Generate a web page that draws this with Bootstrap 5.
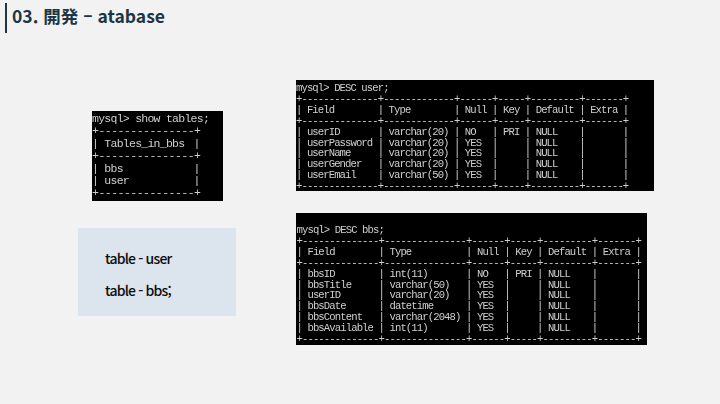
<!DOCTYPE html>
<html lang="ko">
<head>
<meta charset="utf-8">
<title>03. 開発 – atabase</title>
<link href="https://cdn.jsdelivr.net/npm/bootstrap@5.3.0/dist/css/bootstrap.min.css" rel="stylesheet">
<style>
html, body { height: 404px; overflow: hidden; }
body { background: #f2f2f2; font-family: "Noto Sans CJK KR", "Noto Sans", sans-serif; }
.slide-head { margin: 3px 0 0 5px; height: 30px; border-left: 2px solid #1c3645; padding-left: 5px; }
.slide-title { font-size: 17.5px; line-height: 25px; font-weight: 700; color: #1c3645; margin: 0; }
.slide-body { padding: 47px 0 0 78px; }
.side-col { width: 218px; }
.term { background: #000; color: #cfcfcf; font-family: "Liberation Mono", monospace; margin: 0; overflow: hidden; white-space: pre; filter: grayscale(1) blur(.2px); }
.term-tables { width: 131px; height: 90px; margin: 31px 0 0 14px; font-size: 11.5px; letter-spacing: -.74px; line-height: 12.4px; padding: 2px 0 0 0; }
.term-rule { letter-spacing: -.52px; }
.term-tail { padding-left: 3px; }
.term-user { width: 358px; height: 111px; font-size: 10.6px; letter-spacing: -.91px; line-height: 10.9px; padding: 3px 0 0 0; }
.term-bbs { width: 351px; height: 132px; margin-top: 22px; font-size: 10.6px; letter-spacing: -.89px; line-height: 10.9px; padding: 12px 0 0 .5px; }
.note-box { width: 158px; height: 88px; margin-top: 27px; background: #dce4ee; padding: 20px 0 0 27px; color: #0c0c0c; font-size: 14px; font-weight: 500; letter-spacing: -.8px; line-height: 21px; }
.note-box p { margin: 0 0 11px; }
</style>
</head>
<body>
<header class="slide-head d-flex align-items-start">
  <h1 class="slide-title">03. 開発 – atabase</h1>
</header>
<main class="slide-body d-flex align-items-start">
  <div class="side-col d-flex flex-column flex-shrink-0">
    <pre class="term term-tables">mysql&gt; show tables;
<span class="term-rule">+---------------+</span>
| Tables_in_bbs<span class="term-tail"> |</span>
<span class="term-rule">+---------------+</span>
| bbs          <span class="term-tail"> |</span>
| user         <span class="term-tail"> |</span>
<span class="term-rule">+---------------+</span></pre>
    <div class="note-box">
      <p>table - user</p>
      <p>table - bbs;</p>
    </div>
  </div>
  <div class="d-flex flex-column">
    <pre class="term term-user">mysql&gt; DESC user;
+--------------+-------------+------+-----+---------+-------+
| Field        | Type        | Null | Key | Default | Extra |
+--------------+-------------+------+-----+---------+-------+
| userID       | varchar(20) | NO   | PRI | NULL    |       |
| userPassword | varchar(20) | YES  |     | NULL    |       |
| userName     | varchar(20) | YES  |     | NULL    |       |
| userGender   | varchar(20) | YES  |     | NULL    |       |
| userEmail    | varchar(50) | YES  |     | NULL    |       |
+--------------+-------------+------+-----+---------+-------+</pre>
    <pre class="term term-bbs">mysql&gt; DESC bbs;
+--------------+---------------+------+-----+---------+-------+
| Field        | Type          | Null | Key | Default | Extra |
+--------------+---------------+------+-----+---------+-------+
| bbsID        | int(11)       | NO   | PRI | NULL    |       |
| bbsTitle     | varchar(50)   | YES  |     | NULL    |       |
| userID       | varchar(20)   | YES  |     | NULL    |       |
| bbsDate      | datetime      | YES  |     | NULL    |       |
| bbsContent   | varchar(2048) | YES  |     | NULL    |       |
| bbsAvailable | int(11)       | YES  |     | NULL    |       |
+--------------+---------------+------+-----+---------+-------+
6 rows in set (0.00 sec)</pre>
  </div>
</main>
<script src="https://cdn.jsdelivr.net/npm/bootstrap@5.3.0/dist/js/bootstrap.bundle.min.js"></script>
</body>
</html>
